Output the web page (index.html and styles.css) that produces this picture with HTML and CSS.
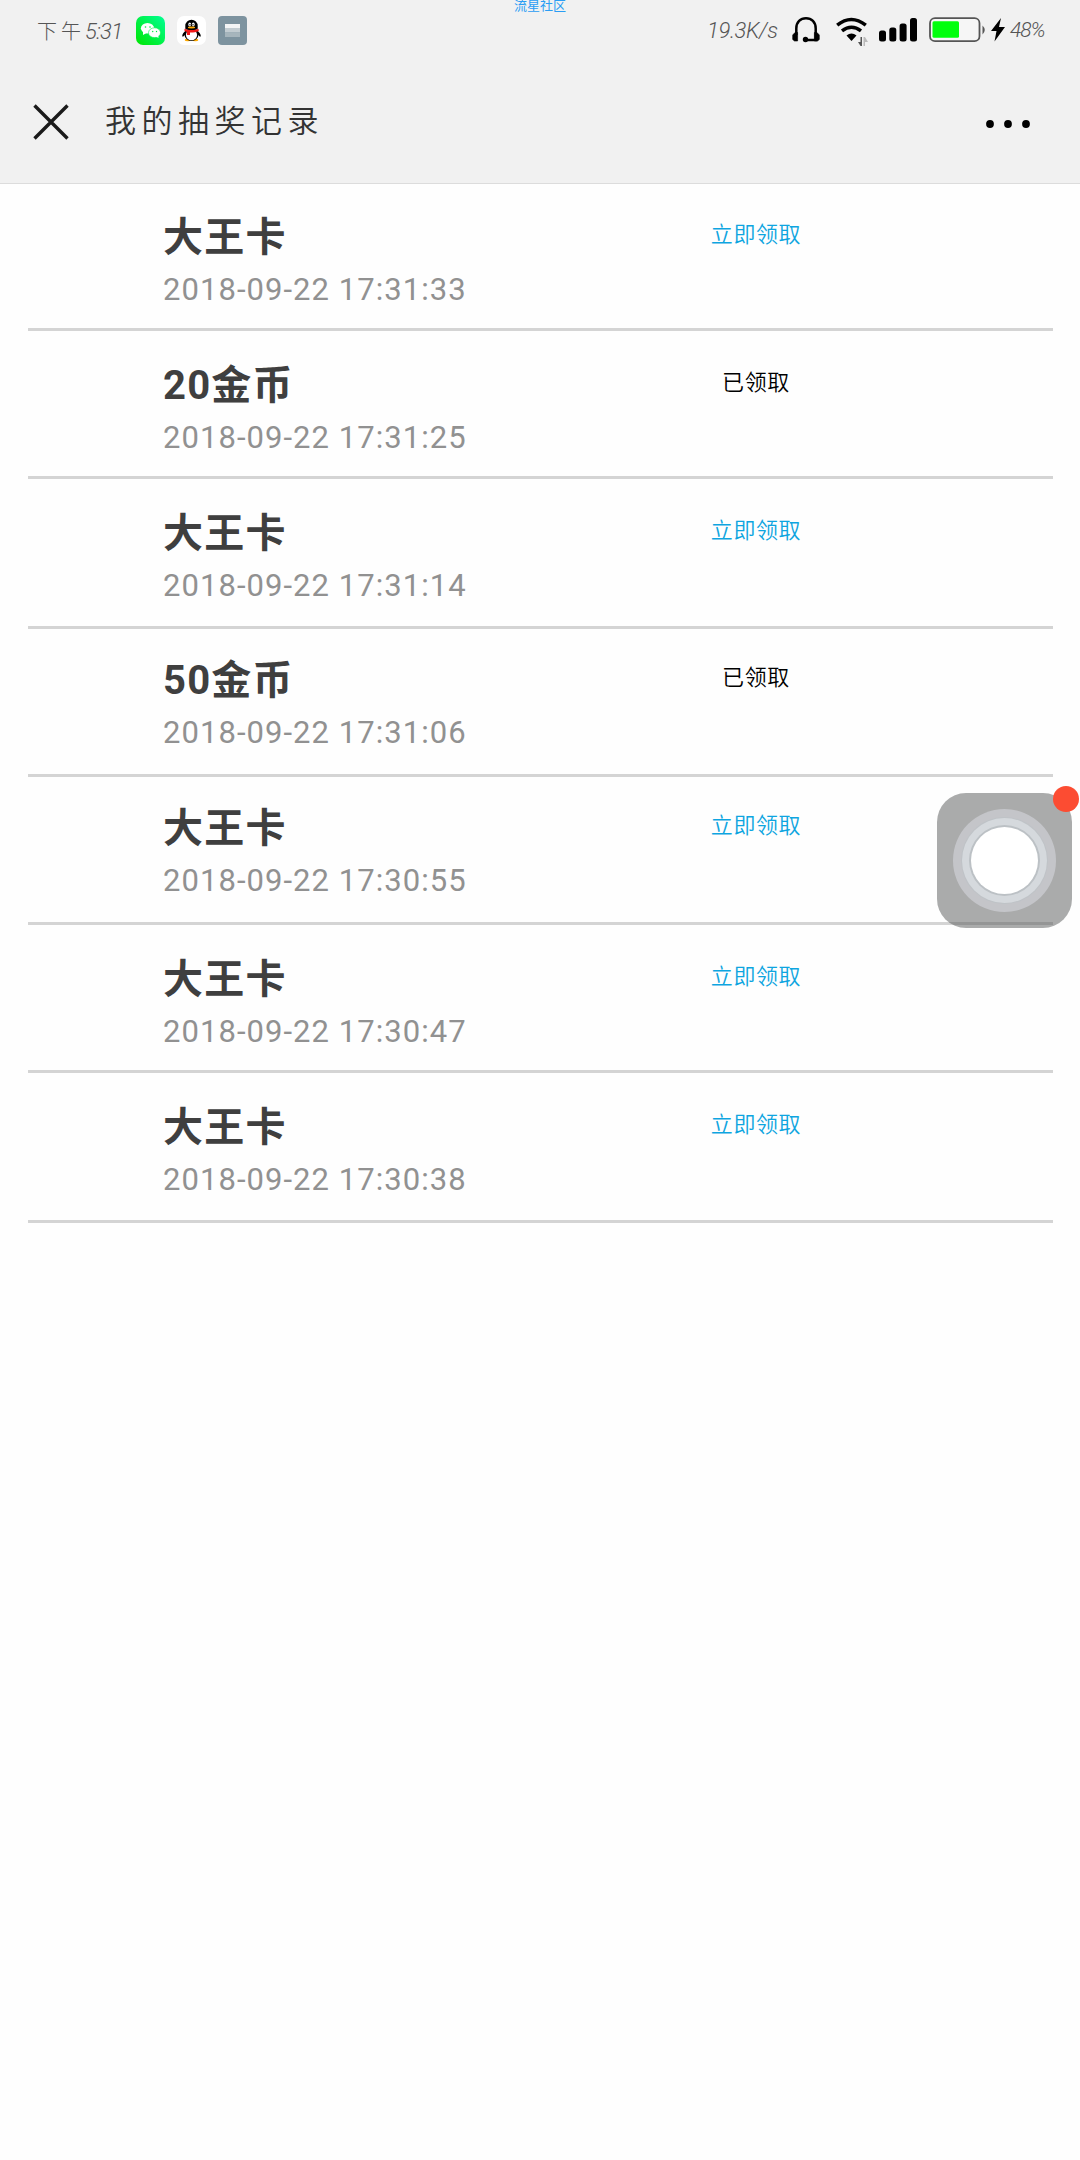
FILE: index.html
```html
<!DOCTYPE html>
<html lang="zh-CN">
<head>
  <meta charset="UTF-8">
  <meta name="viewport" content="width=device-width, initial-scale=1.0">
  <title>我的抽奖记录</title>
  <link rel="stylesheet" href="styles.css">
</head>
<body>
  <header class="header">
    <div class="status-bar">
      <span class="time">下午<i>5:31</i></span>
      <svg class="app-icon" viewBox="0 0 29 29">
        <defs>
          <linearGradient id="wx" x1="0" y1="1" x2="1" y2="0">
            <stop offset="0" stop-color="#00e500"/>
            <stop offset="1" stop-color="#00ff96"/>
          </linearGradient>
        </defs>
        <rect width="29" height="29" rx="7" fill="url(#wx)"/>
        <ellipse cx="11.5" cy="12.3" rx="6.6" ry="5.3" fill="#fff"/>
        <path d="M7 15l0 4 3.500-2z" fill="#fff"/>
        <ellipse cx="18.500" cy="16.700" rx="6" ry="4.900" fill="#fff" stroke="#00f34e" stroke-width=".6"/>
        <path d="M19 20l3.500 2-.5-4z" fill="#fff"/>
        <g fill="#00ec40">
          <circle cx="9.500" cy="11" r=".8"/>
          <circle cx="14" cy="11" r=".8"/>
          <circle cx="16.700" cy="15.500" r=".7"/>
          <circle cx="20.500" cy="15.500" r=".7"/>
        </g>
      </svg>
      <svg class="app-icon" viewBox="0 0 29 29">
        <rect width="29" height="29" rx="7" fill="#fff"/>
        <path d="M9.500 14C7 16 5 18 5.200 20.500c1 .4 2-.5 2.600-1.500h13.400c.6 1 1.600 1.900 2.600 1.500C24 18 22 16 19.500 14z" fill="#000"/>
        <ellipse cx="10.700" cy="24" rx="3" ry="1.200" fill="#fa0"/>
        <ellipse cx="18.300" cy="24" rx="3" ry="1.200" fill="#fa0"/>
        <ellipse cx="14.500" cy="18.500" rx="7" ry="6.500" fill="#000"/>
        <ellipse cx="14.500" cy="19" rx="5.600" ry="5.300" fill="#fff"/>
        <path d="M8.300 12.500V10a6.200 6.200 0 0 1 12.400 0v2.500c0 2-12.400 2-12.400 0z" fill="#000"/>
        <ellipse cx="12.700" cy="8.500" rx="1.400" ry="2" fill="#fff"/>
        <ellipse cx="16.300" cy="8.500" rx="1.400" ry="2" fill="#fff"/>
        <circle cx="13" cy="8.800" r=".7"/>
        <circle cx="16" cy="8.800" r=".7"/>
        <ellipse cx="14.500" cy="11.500" rx="3.600" ry=".9" fill="#fa0"/>
        <path d="M7.500 12.700c4 1.800 10 1.800 14 0l.3 2.300c-3 1.500-6 1.700-8.800 1.600V19h-3v-3l-2.500-1z" fill="#f01a1a"/>
      </svg>
      <svg class="app-icon" viewBox="0 0 29 29">
        <rect width="29" height="29" rx="4" fill="#7d939f"/>
        <rect x="7" y="8" width="15" height="4" fill="#f3f5f6"/>
        <rect x="7" y="12" width="15" height="4.500" fill="#c2ccd1"/>
        <rect x="7" y="16.500" width="15" height="4.500" fill="#a6b5bc"/>
      </svg>
      <span class="speed">19.3K/s</span>
      <svg class="headset" width="28" height="26" viewBox="0 0 28 26">
        <path d="M4.300 18v-6.500C4.300 5 8.500 1.300 14 1.300S23.700 5 23.700 11.500V23H14" fill="none" stroke="#000" stroke-width="2.500"/>
        <path d="M3 15.500h2.600V24H2.500L.7 22.500v-4.500zM25 15.500h-2.600V24h3.100l1.800-1.500v-4.500z" stroke="#000" stroke-width=".6"/>
        <circle cx="13.500" cy="22.500" r="2.700"/>
      </svg>
      <svg class="wifi" width="32" height="30" viewBox="0 0 32 30">
        <g fill="none" stroke="#000" stroke-width="3.500">
          <path d="M1.200 8.200q14-11.400 28.600 0"/>
          <path d="M6 13.900q9.500-7.400 19 0"/>
        </g>
        <path d="M10.500 18.500q5-4 10 0L15.500 24z"/>
        <path d="M26 20v9h-1.500l-2.500-4h2.500v-5z" fill="#555"/>
        <path d="M27.500 20v9h1.500v-4h3l-3-5z" fill="#bbb"/>
      </svg>
      <svg class="signal" width="38" height="24" viewBox="0 0 38 24">
        <rect y="12.500" width="7" height="11" rx="2.500"/>
        <rect x="10.300" y="9.500" width="7" height="14" rx="2.500"/>
        <rect x="20.600" y="5.500" width="7" height="18" rx="2.500"/>
        <rect x="31" y="0" width="7" height="23.500" rx="2.500"/>
      </svg>
      <svg class="battery" width="56" height="26" viewBox="0 0 56 26">
        <rect x="1" y="1.200" width="49.500" height="23" rx="5" fill="#f6f6f6" stroke="#555" stroke-width="1.800"/>
        <rect x="3.500" y="4.200" width="26.500" height="16.500" rx="1.500" fill="#00ff0c"/>
        <path d="M53.500 8.500q4.500 4.500 0 9z" fill="#555"/>
      </svg>
      <svg class="bolt" width="14" height="24" viewBox="0 0 14 24">
        <path d="M10 0L0 13h5.500L3.500 23.500 14 9H8z"/>
      </svg>
      <span class="percent">48%</span>
      <span class="watermark">流星社区</span>
    </div>
    <div class="title-bar">
      <svg class="close" width="36" height="36" viewBox="0 0 36 36">
        <path d="M1.500 1.500l33 33M34.500 1.500l-33 33" stroke="#1a1a1a" stroke-width="3.400"/>
      </svg>
      <h1 class="title">我的抽奖记录</h1>
      <svg class="more" width="44" height="8" viewBox="0 0 44 8">
        <circle cx="4" cy="4" r="3.900"/>
        <circle cx="22" cy="4" r="3.900"/>
        <circle cx="40" cy="4" r="3.900"/>
      </svg>
    </div>
  </header>

  <ul class="records">
    <li class="record">
      <div class="info"><h2>大王卡</h2><p>2018-09-22 17:31:33</p></div>
      <a class="status">立即领取</a>
    </li>
    <li class="record">
      <div class="info"><h2>20金币</h2><p>2018-09-22 17:31:25</p></div>
      <span class="status done">已领取</span>
    </li>
    <li class="record">
      <div class="info"><h2>大王卡</h2><p>2018-09-22 17:31:14</p></div>
      <a class="status">立即领取</a>
    </li>
    <li class="record">
      <div class="info"><h2>50金币</h2><p>2018-09-22 17:31:06</p></div>
      <span class="status done">已领取</span>
    </li>
    <li class="record">
      <div class="info"><h2>大王卡</h2><p>2018-09-22 17:30:55</p></div>
      <a class="status">立即领取</a>
    </li>
    <li class="record">
      <div class="info"><h2>大王卡</h2><p>2018-09-22 17:30:47</p></div>
      <a class="status">立即领取</a>
    </li>
    <li class="record">
      <div class="info"><h2>大王卡</h2><p>2018-09-22 17:30:38</p></div>
      <a class="status">立即领取</a>
    </li>
  </ul>

  <div class="float-ball">
    <div class="ring"></div>
    <span class="dot"></span>
  </div>
</body>
</html>
```
FILE: styles.css
```css
* {
  box-sizing: border-box;
}

body {
  margin: 0;
  min-height: 2160px;
  background: #fefefe;
  font-family: Roboto, "Noto Sans CJK SC", sans-serif;
}

.header {
  height: 184px;
  background: #f1f1f1;
  border-bottom: 1px solid #dcdcdc;
}

/* status bar */
.status-bar {
  position: relative;
  display: flex;
  align-items: center;
  height: 60px;
  padding: 0 33px 0 37px;
  color: #555;
  font-weight: 300;
}

.time {
  width: 99px;
  font-size: 20px;
  letter-spacing: 4px;
  white-space: nowrap;
}

.time i {
  font-size: 22px;
  letter-spacing: -.7px;
}

.app-icon {
  width: 29px;
  height: 29px;
  margin-right: 12px;
}

.speed {
  margin-left: auto;
  width: 85px;
  font-size: 22px;
  font-style: italic;
  letter-spacing: -.4px;
  white-space: nowrap;
}

.headset {
  margin-right: 16px;
}

.wifi {
  margin: 4px 11px 0 0;
}

.signal {
  margin-right: 12px;
}

.battery {
  margin-right: 6px;
}

.bolt {
  margin-right: 5px;
}

.percent {
  width: 37px;
  font-size: 21px;
  font-style: italic;
  letter-spacing: -1px;
  white-space: nowrap;
}

.watermark {
  position: absolute;
  top: -3px;
  left: 514px;
  font-size: 13px;
  font-weight: 400;
  line-height: 18px;
  color: #2a9df4;
}

/* title bar */
.title-bar {
  display: flex;
  align-items: center;
  height: 124px;
  padding: 0 50px 0 33px;
}

.title {
  margin: 0 auto 8px 36px;
  font-size: 31px;
  font-weight: 350;
  letter-spacing: 5.500px;
  color: #333;
}

.more {
  margin-top: 3px;
}

/* records */
.records {
  margin: 0 27px 0 28px;
  padding: 0;
  list-style: none;
}

.record {
  display: flex;
  height: 148px;
  padding: 30px 0 0 135px;
  border-bottom: 3px solid #d4d4d4;
}

.record:first-child {
  height: 147px;
  padding-top: 29px;
}

.record:nth-child(4n+3) {
  height: 150px;
}

.record:nth-child(4),
.record:nth-child(5) {
  padding-top: 27px;
}

.info {
  width: 493px;
}

.info h2 {
  margin: 0;
  font-size: 40px;
  line-height: 50px;
  letter-spacing: 1.200px;
  color: #3f3f3f;
}

.info p {
  margin: 0;
  font-size: 31px;
  line-height: 54px;
  letter-spacing: 1.050px;
  color: #919191;
}

.status {
  width: 200px;
  padding-top: 6px;
  font-size: 22px;
  font-weight: 350;
  line-height: 32px;
  letter-spacing: .6px;
  text-align: center;
  color: #0ea5e0;
}

.status.done {
  color: #000;
}

/* floating assistive button */
.float-ball {
  position: absolute;
  top: 793px;
  left: 937px;
  display: flex;
  align-items: center;
  justify-content: center;
  width: 135px;
  height: 135px;
  border-radius: 29px;
  background: rgba(80, 81, 82, .48);
}

.ring {
  width: 67px;
  height: 67px;
  border-radius: 50%;
  background: #fff;
  box-shadow: 0 0 0 2px #bcc1c5, 0 0 0 9px #d5d9dd, 0 0 0 10px #bfc3c7, 0 0 0 18px #c4c5c9;
}

.dot {
  position: absolute;
  top: -7px;
  right: -7px;
  width: 26px;
  height: 26px;
  border-radius: 50%;
  background: #fc4c32;
}
```
